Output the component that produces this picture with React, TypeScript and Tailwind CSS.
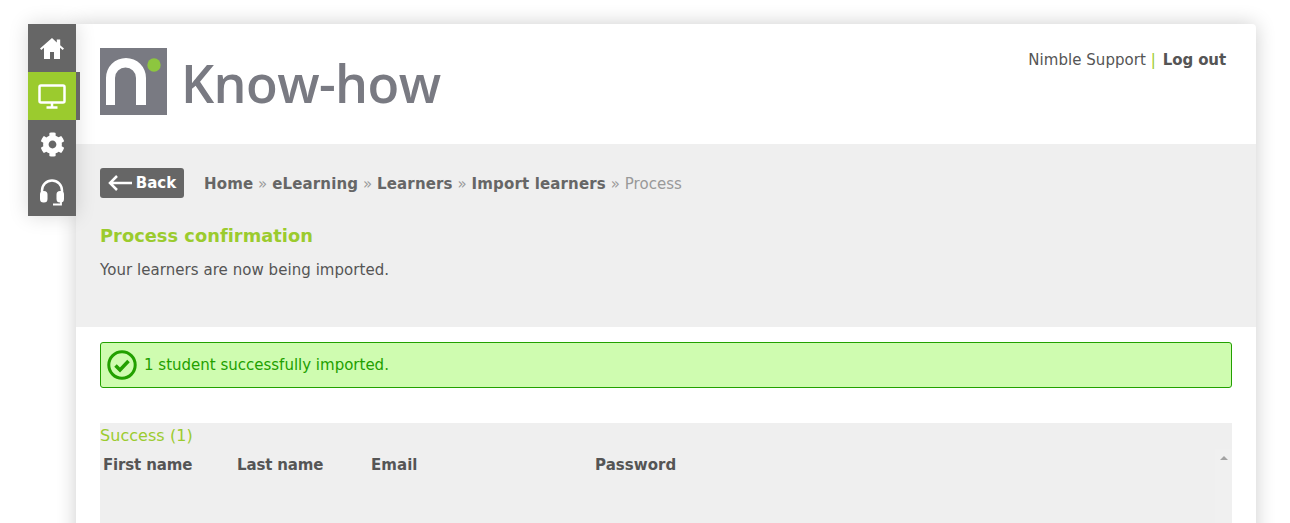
import { FaCog } from "react-icons/fa";

function Logo() {
  return (
    <div className="flex items-center">
      <svg width="67" height="67" viewBox="0 0 67 67" className="shrink-0">
        <rect width="67" height="67" fill="#797a82" />
        <path d="M6 57V30a20 20 0 0 1 40 0v27H36V30a10.500 10.500 0 0 0-21 0v27z" fill="#fff" />
        <circle cx="54" cy="17" r="6.700" fill="#8dc63f" />
      </svg>
      <span className="ml-[14px] mt-[3px] text-[52px] leading-none font-['Open_Sans',sans-serif] font-semibold text-[#797a82] tracking-[-0.6px]">
        Know-how
      </span>
    </div>
  );
}

function SideItem({ active, children }: { active?: boolean; children: React.ReactNode }) {
  return (
    <div className={`relative flex h-12 w-12 items-center justify-center ${active ? "bg-[#9bcb2e]" : "bg-[#666666]"}`}>
      {children}
      {active && <div className="absolute left-12 top-0 h-12 w-1 bg-[#666666]" />}
    </div>
  );
}

function Crumb({ children }: { children: React.ReactNode }) {
  return <b className="tracking-[0.15px] text-[#666666]">{children}</b>;
}

export default function App() {
  return (
    <div className="flex h-[523px] overflow-hidden bg-white pl-7 pt-6 font-['DejaVu_Sans',sans-serif] text-[15px] tracking-[0.05px] text-[#555555]">
      <nav className="z-10 h-48 w-12 shrink-0 shadow-[0_0_20px_rgba(0,0,0,0.15)]">
        <SideItem>
          <svg width="24" height="21" viewBox="0 0 24 21" fill="#fff">
            <path d="M12 0 0 10.500l1.300 1.500L4 9.700V21h6v-7h4v7h6V9.700l2.700 2.300 1.300-1.500-3.800-3.300V1.500h-3.400v3z" />
          </svg>
        </SideItem>
        <SideItem active>
          <svg width="28" height="25" viewBox="0 0 28 25" fill="none" stroke="#fff" strokeWidth="2.500">
            <rect x="1.500" y="1.500" width="25" height="17" rx="1.500" />
            <path d="M14 19v4M8.500 23.500h11" />
          </svg>
        </SideItem>
        <SideItem>
          <FaCog size={25} color="#fff" />
        </SideItem>
        <SideItem>
          <svg width="24" height="27" viewBox="0 0 24 27" fill="none" stroke="#fff" strokeWidth="2.500">
            <path d="M2 16V11.500a10 10 0 0 1 20 0V16" />
            <rect x="1" y="13" width="5.500" height="9.500" rx="2.500" fill="#fff" strokeWidth="2" />
            <rect x="17.500" y="13" width="5.500" height="9.500" rx="2.500" fill="#fff" strokeWidth="2" />
            <path d="M21 22v3.500h-8" strokeWidth="1.800" />
          </svg>
        </SideItem>
      </nav>

      <main className="h-[620px] w-[1180px] shrink-0 rounded-tr-sm bg-white shadow-[0_0_20px_rgba(0,0,0,0.2)]">
        <header className="flex h-[120px] items-start justify-between pl-6 pr-[30px] pt-6">
          <Logo />
          <div className="pt-[2px] leading-[20px]">
            Nimble Support <span className="mr-[2px] text-[#9bcb2e]">|</span> <b className="tracking-[-0.1px]">Log out</b>
          </div>
        </header>

        <section className="h-[183px] bg-[#efefef] px-6 pt-6">
          <div className="flex items-center">
            <button className="flex h-[30px] w-[84px] items-center justify-center gap-1 rounded-[3px] bg-[#666666] font-bold text-white">
              <svg width="24" height="16" viewBox="0 0 24 16" fill="none" stroke="#fff" strokeWidth="2.500" className="shrink-0">
                <path d="M24 8H2M9 1 2 8l7 7" />
              </svg>
              Back
            </button>
            <div className="ml-5 pt-[2px] text-[#999999]">
              <Crumb>Home</Crumb> » <Crumb>eLearning</Crumb> » <Crumb>Learners</Crumb> » <Crumb>Import learners</Crumb> » Process
            </div>
          </div>
          <h1 className="mt-[25px] text-[17.800px] font-bold leading-[26px] text-[#9bcb2e]">Process confirmation</h1>
          <p className="mt-[11px] leading-[20px]">Your learners are now being imported.</p>
        </section>

        <div className="px-6">
          <div className="mt-[15px] flex h-[46px] items-center gap-[7px] rounded-[3px] border border-[#22a000] bg-[#cffcb0] pl-[6px] tracking-normal text-[#22a000]">
            <svg width="30" height="30" viewBox="0 0 30 30" fill="none" stroke="#22a000" className="shrink-0">
              <circle cx="15" cy="15" r="13.200" strokeWidth="3" />
              <path d="M8.500 15.500 13 20l8.500-9" strokeWidth="3.500" />
            </svg>
            1 student successfully imported.
          </div>

          <div className="relative mt-[35px] h-[200px] bg-[#efefef]">
            <div className="text-[16px] leading-[26px] text-[#9bcb2e]">Success (1)</div>
            <div className="mt-[6px] grid grid-cols-[134px_134px_224px_1fr] pl-[3px] font-bold leading-[20px]">
              <span className="tracking-[-0.15px]">First name</span>
              <span className="tracking-[-0.15px]">Last name</span>
              <span>Email</span>
              <span>Password</span>
            </div>
            <div className="absolute right-0 top-[26px] bottom-0 flex w-[17px] justify-center bg-[#f0f0f0] pt-[7px]">
              <div className="h-0 w-0 border-x-[4px] border-b-[4px] border-x-transparent border-b-[#a3a3a3]" />
            </div>
          </div>
        </div>
      </main>
    </div>
  );
}
